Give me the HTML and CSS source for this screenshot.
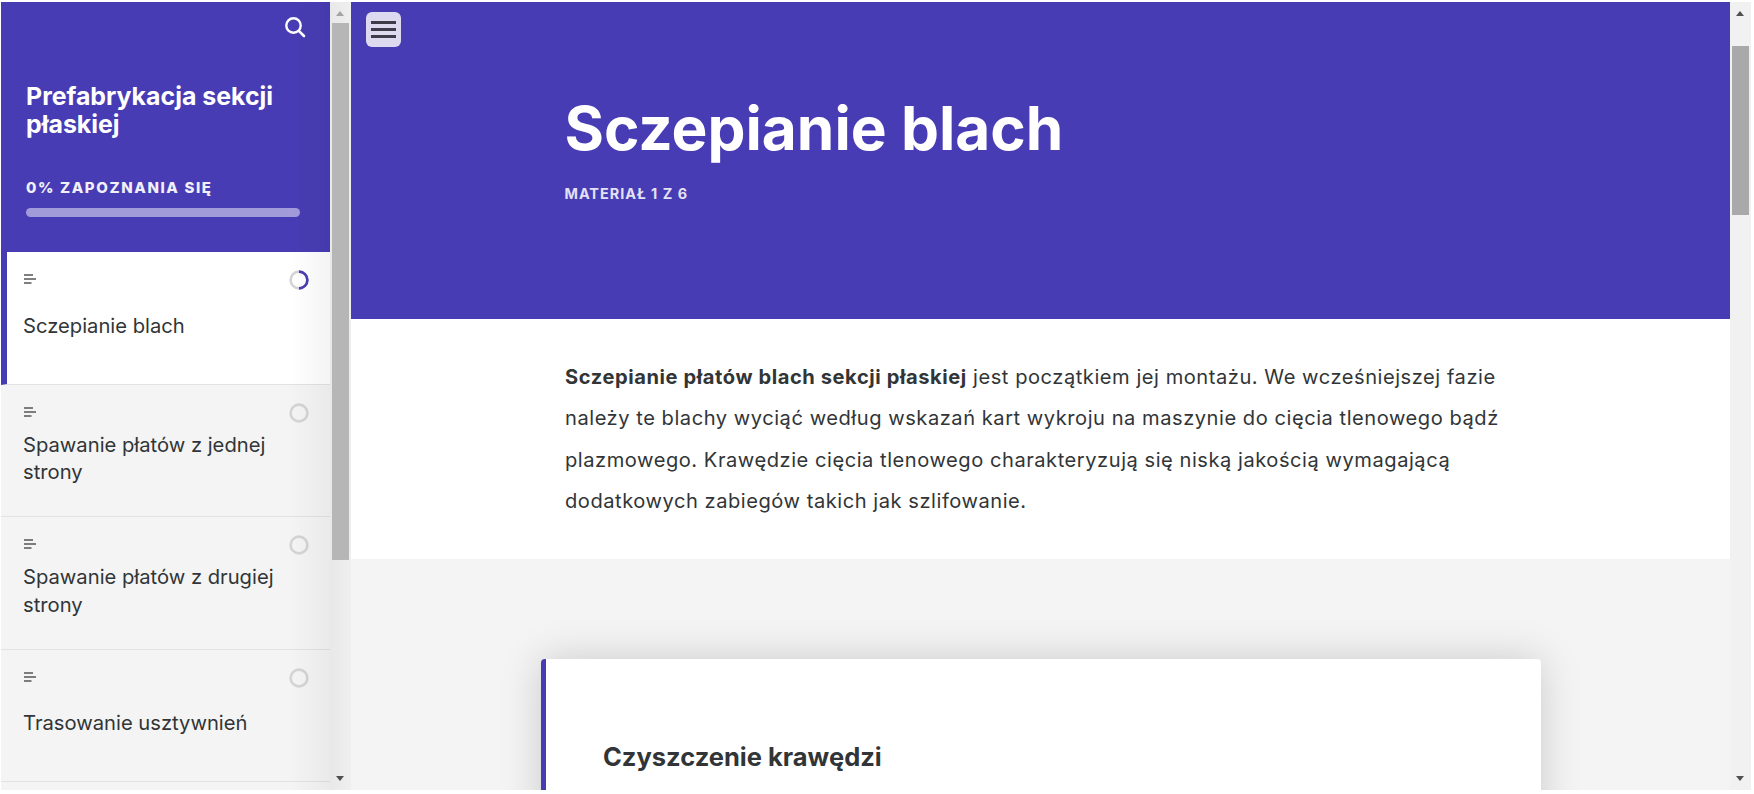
FILE: index.html
```html
<!DOCTYPE html>
<html lang="pl">
<head>
<meta charset="utf-8">
<title>Sczepianie blach</title>
<link rel="stylesheet" href="styles.css">
</head>
<body>
<div class="app">
  <aside class="sidebar">
    <div class="side-scroll">
      <header class="side-head">
        <div class="search-row">
          <svg class="search" viewBox="0 0 22 22" width="22" height="22"><circle cx="9.5" cy="9.5" r="7.2" fill="none" stroke="#fff" stroke-width="2.4"/><path d="M14.8 14.8L20 20" stroke="#fff" stroke-width="2.6" stroke-linecap="round"/></svg>
        </div>
        <h2 class="course">Prefabrykacja sekcji płaskiej</h2>
        <div class="progress-label">0% ZAPOZNANIA SIĘ</div>
        <div class="progress-bar"></div>
      </header>
      <nav class="lessons">
        <a class="lesson active">
          <div class="lesson-top">
            <svg class="doc" viewBox="0 0 12 10" width="12" height="10"><path d="M0 1h9M0 5h12M0 9h7.5" stroke="#555" stroke-width="1.4"/></svg>
            <svg class="ring" viewBox="0 0 22 22" width="22" height="22"><circle cx="11" cy="11" r="8.4" fill="none" stroke="#d4d4d4" stroke-width="2.6"/><path d="M11 2.6a8.4 8.4 0 0 1 0 16.8" fill="none" stroke="#483cb4" stroke-width="2.6"/></svg>
          </div>
          <div class="lesson-title">Sczepianie blach</div>
        </a>
        <a class="lesson">
          <div class="lesson-top">
            <svg class="doc" viewBox="0 0 12 10" width="12" height="10"><path d="M0 1h9M0 5h12M0 9h7.5" stroke="#555" stroke-width="1.4"/></svg>
            <svg class="ring" viewBox="0 0 22 22" width="22" height="22"><circle cx="11" cy="11" r="8.4" fill="none" stroke="#d4d4d4" stroke-width="2.6"/></svg>
          </div>
          <div class="lesson-title">Spawanie płatów z jednej strony</div>
        </a>
        <a class="lesson">
          <div class="lesson-top">
            <svg class="doc" viewBox="0 0 12 10" width="12" height="10"><path d="M0 1h9M0 5h12M0 9h7.5" stroke="#555" stroke-width="1.4"/></svg>
            <svg class="ring" viewBox="0 0 22 22" width="22" height="22"><circle cx="11" cy="11" r="8.4" fill="none" stroke="#d4d4d4" stroke-width="2.6"/></svg>
          </div>
          <div class="lesson-title">Spawanie płatów z drugiej strony</div>
        </a>
        <a class="lesson">
          <div class="lesson-top">
            <svg class="doc" viewBox="0 0 12 10" width="12" height="10"><path d="M0 1h9M0 5h12M0 9h7.5" stroke="#555" stroke-width="1.4"/></svg>
            <svg class="ring" viewBox="0 0 22 22" width="22" height="22"><circle cx="11" cy="11" r="8.4" fill="none" stroke="#d4d4d4" stroke-width="2.6"/></svg>
          </div>
          <div class="lesson-title">Trasowanie usztywnień</div>
        </a>
      </nav>
    </div>
    <div class="scrollbar side-bar">
      <span class="arrow up off"></span>
      <span class="thumb side-thumb"></span>
      <span class="arrow down"></span>
    </div>
  </aside>
  <main class="main">
    <button class="menu" aria-label="Menu"><span></span><span></span><span></span></button>
    <section class="hero">
      <h1>Sczepianie blach</h1>
      <div class="counter">MATERIAŁ 1 Z 6</div>
    </section>
    <section class="intro">
      <p><strong>Sczepianie płatów blach sekcji płaskiej</strong> jest początkiem jej montażu. We wcześniejszej fazie należy te blachy wyciąć według wskazań kart wykroju na maszynie do cięcia tlenowego bądź plazmowego. Krawędzie cięcia tlenowego charakteryzują się niską jakością wymagającą dodatkowych zabiegów takich jak szlifowanie.</p>
    </section>
    <section class="grey">
      <article class="card">
        <h3>Czyszczenie krawędzi</h3>
      </article>
    </section>
  </main>
  <div class="scrollbar page-bar">
    <span class="arrow up"></span>
    <span class="thumb page-thumb"></span>
    <span class="arrow down"></span>
  </div>
</div>
</body>
</html>
```
FILE: styles.css
```css
* { box-sizing: border-box; }
html, body { margin: 0; height: 100%; background: #fff; overflow: hidden; }
body { padding: 2px 3px 4px 1px; font-family: Inter, "Liberation Sans", sans-serif; color: #313537; }
.app { display: flex; height: 788px; overflow: hidden; }

.sidebar { position: relative; display: flex; width: 350px; flex: none; background: #f4f4f4; }
.sidebar::after { content: ""; position: absolute; top: 0; bottom: 0; right: 21px; width: 40px; background: linear-gradient(to right, rgba(0,0,0,0), rgba(0,0,0,.045)); pointer-events: none; }
.side-scroll { width: 329px; flex: none; overflow: hidden; }
.side-head { height: 250px; background: #483cb4; padding: 0 0 0 25px; }
.search-row { display: flex; justify-content: flex-end; padding: 14px 24px 0 0; height: 36px; }
.search { display: block; }
.course { margin: 44px 0 0; width: 270px; font-size: 24.9px; line-height: 28px; font-weight: 700; color: #fff; }
.progress-label { margin-top: 40px; font-size: 15px; line-height: 20px; font-weight: 800; letter-spacing: 1.6px; color: #f0effa; }
.progress-bar { margin-top: 10px; width: 274px; height: 9px; border-radius: 5px; background: #a29bda; }

.lesson { display: block; height: 132.5px; padding: 20px 20px 0 23px; border-bottom: 1px solid #e2e2e2; background: #f4f4f4; }
.lesson.active { background: #fff; border-left: 6px solid #483cb4; padding-left: 17px; }
.lesson-top { display: flex; justify-content: space-between; align-items: flex-start; height: 20px; }
.doc { display: block; margin-top: 2px; }
.ring { display: block; margin-top: -3px; }
.lesson-title { height: 63px; margin: 2px 0 0 -1px; display: flex; align-items: center; padding-right: 25px; font-size: 20.2px; line-height: 27.5px; color: #313537; }

.scrollbar { display: flex; flex-direction: column; align-items: center; flex: none; width: 21px; height: 100%; background: #f1f1f1; position: relative; }
.side-bar { background: linear-gradient(to right, #e8e8e8, #efefef); }
.thumb { display: block; width: 17px; position: absolute; left: 2px; }
.side-thumb { top: 21px; height: 537px; background: #b6b6b6; }
.page-thumb { top: 44px; height: 169px; background: #a9a9a9; }
.arrow { position: absolute; left: 6px; width: 0; height: 0; border-left: 4.5px solid transparent; border-right: 4.5px solid transparent; }
.arrow.up { top: 9px; border-bottom: 5px solid #505050; }
.arrow.up.off { border-bottom-color: #a4a4a4; }
.arrow.down { bottom: 9px; border-top: 5px solid #505050; }

.main { position: relative; flex: 1; min-width: 0; height: 100%; overflow: hidden; background: #f4f4f4; }
.menu { position: absolute; top: 10px; left: 15px; width: 35px; height: 35px; padding: 9px 5px 0; border: 0; border-radius: 6px; background: #dddaf0; display: flex; flex-direction: column; gap: 4.6px; }
.menu span { display: block; width: 25px; height: 2.6px; background: #3d3d4a; }
.hero { height: 317px; background: #483cb4; padding: 85px 0 0 213.5px; color: #fff; }
.hero h1 { margin: 0; font-size: 60.3px; line-height: 84px; font-weight: 700; }
.counter { margin-top: 13px; font-size: 14.4px; line-height: 20px; font-weight: 700; letter-spacing: 1px; color: #e3e1f5; }
.intro { height: 240px; background: #fff; padding: 38px 0 0 214px; }
.intro p { margin: 0; width: 948px; font-size: 20.1px; line-height: 41.3px; letter-spacing: .535px; color: #313537; }
.intro strong { font-weight: 700; letter-spacing: .58px; }
.grey { padding: 100px 0 0 190px; }
.card { width: 1000px; height: 400px; background: #fff; border-left: 5px solid #483cb4; border-radius: 4px; box-shadow: 0 0 40px rgba(0,0,0,.17); padding: 77px 0 0 57px; }
.card h3 { margin: 0; font-size: 25.5px; line-height: 42px; font-weight: 700; color: #313537; }
```
